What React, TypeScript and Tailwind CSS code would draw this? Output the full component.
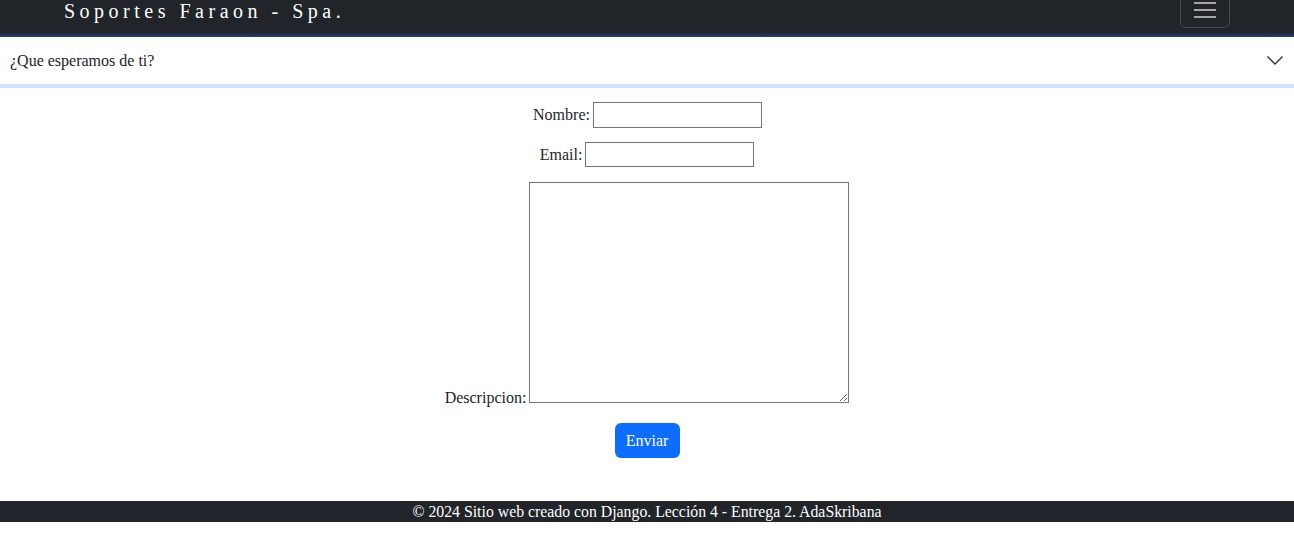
const serif = { fontFamily: '"Liberation Serif", "Times New Roman", serif' };

export default function App() {
  return (
    <div className="w-[1294px] h-[560px] bg-white text-[#212529] overflow-hidden" style={serif}>
      {/* Navbar */}
      <nav className="h-[33px] bg-[#212529] flex justify-between items-start px-[64px] overflow-hidden">
        <span className="text-white text-[20px] leading-[24px] tracking-[4.5px] -mt-[1px]">
          Soportes Faraon - Spa.
        </span>
        <button className="w-[50px] h-[40px] -mt-[12px] rounded-[6px] border border-[#44484d] flex flex-col items-center justify-end gap-[5px] pb-[9px]">
          <span className="block w-[22px] h-[2px] bg-[#a4a6a8]" />
          <span className="block w-[22px] h-[2px] bg-[#a4a6a8]" />
          <span className="block w-[22px] h-[2px] bg-[#a4a6a8]" />
        </button>
      </nav>
      <div className="h-[4px] bg-gradient-to-b from-[#1d2a3b] to-[#23416b]" />

      {/* Accordion */}
      <div className="h-[47px] flex items-center justify-between pl-[10px] pr-[11px]">
        <span className="text-[16px] text-[#212529]">¿Que esperamos de ti?</span>
        <svg width="16" height="9" viewBox="0 0 16 9" fill="none" stroke="#333" strokeWidth="1.4">
          <polyline points="0.5,0.5 8,8 15.5,0.5" />
        </svg>
      </div>
      <div className="h-[4px] bg-[#cfe2ff]" />

      {/* Form */}
      <form className="flex flex-col items-center pt-[14px]">
        <div className="flex items-center gap-[3px] pl-[1px]">
          <label className="text-[16px]">Nombre:</label>
          <input className="w-[169px] h-[26px] border border-[#767676] bg-white" />
        </div>
        <div className="flex items-center gap-[3px] mt-[14px]">
          <label className="text-[16px]">Email:</label>
          <input className="w-[169px] h-[25px] border border-[#767676] bg-white" />
        </div>
        <div className="flex items-end gap-[3px] mt-[15px]">
          <label className="text-[16px] leading-[18px] -mb-[4px]">Descripcion:</label>
          <textarea className="w-[320px] h-[221px] border border-[#767676] bg-white" />
        </div>
        <button
          type="button"
          className="mt-[20px] w-[65px] h-[35px] rounded-[6px] bg-[#0d6efd] text-white text-[16px]"
        >
          Enviar
        </button>
      </form>

      {/* Footer */}
      <footer className="mt-[43px] h-[21px] bg-[#212529] text-white text-[15.8px] leading-[21px] text-center">
        © 2024 Sitio web creado con Django. Lección 4 - Entrega 2. AdaSkribana
      </footer>
    </div>
  );
}
